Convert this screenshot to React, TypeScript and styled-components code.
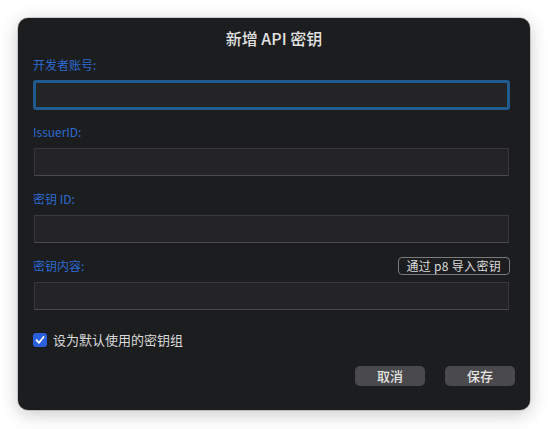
import { createGlobalStyle } from 'styled-components';
import styled from 'styled-components';

const GlobalStyle = createGlobalStyle`
  html, body {
    margin: 0;
    padding: 0;
    background: #ffffff;
    font-family: "Noto Sans CJK SC", "Noto Sans", sans-serif;
  }
`;

const Page = styled.div`
  width: 548px;
  height: 429px;
  padding: 18px 0 0 18px;
  box-sizing: border-box;
`;

const Dialog = styled.div`
  width: 512px;
  height: 392px;
  box-sizing: border-box;
  background: #1c1d1f;
  border-radius: 10px;
  box-shadow: 0 4px 18px rgba(0, 0, 0, 0.22), 0 0 0 0.5px rgba(0, 0, 0, 0.3);
  padding: 9px 15px 0 15px;
  display: flex;
  flex-direction: column;
`;

const Title = styled.div`
  text-align: center;
  color: #e2e2e2;
  font-size: 16px;
  font-weight: 500;
  line-height: 22px;
  margin-bottom: 6px;
`;

const Field = styled.div`
  display: flex;
  flex-direction: column;
  padding-right: 5px;
  margin-bottom: 12px;
`;

const LabelRow = styled.div`
  display: flex;
  align-items: center;
  justify-content: space-between;
  height: 20px;
  margin-bottom: 5px;
`;

const Label = styled.label`
  color: #2d6ad0;
  font-size: 12px;
  line-height: 16px;
`;

const Input = styled.input<{ $focused?: boolean }>`
  box-sizing: border-box;
  height: 28px;
  width: ${(p) => (p.$focused ? '100%' : 'calc(100% - 2px)')};
  margin: ${(p) => (p.$focused ? '0' : '1px 1px')};
  background: #242426;
  color: #e0e0e0;
  font-family: inherit;
  font-size: 13px;
  padding: 0 4px;
  outline: none;
  border: 1px solid #38383a;
  border-bottom-color: #4a4a4c;
  border-radius: ${(p) => (p.$focused ? '3px' : '0')};
  ${(p) =>
    p.$focused &&
    `
    height: 30px;
    border: 3px solid #1f5b8f;
    caret-color: #ffffff;
  `}
`;

const SmallButton = styled.button`
  height: 18px;
  box-sizing: border-box;
  padding: 0 8px;
  background: transparent;
  border: 1px solid #7a7a7c;
  border-radius: 4px;
  color: #dcdcdc;
  font-family: inherit;
  font-size: 12px;
  line-height: 16px;
  letter-spacing: 0.3px;
`;

const CheckRow = styled.label`
  display: flex;
  align-items: center;
  gap: 6px;
  margin-top: 7px;
  color: #dadada;
  font-size: 13px;
`;

const CheckBox = styled.span`
  width: 14px;
  height: 14px;
  border-radius: 3px;
  background: #2a5fe0;
  display: flex;
  align-items: center;
  justify-content: center;
`;

const Actions = styled.div`
  display: flex;
  justify-content: flex-end;
  gap: 20px;
  margin-top: 17px;
`;

const ActionButton = styled.button`
  width: 70px;
  height: 20px;
  border: none;
  border-radius: 5px;
  background: #4a4a4c;
  color: #e6e6e6;
  font-family: inherit;
  font-size: 13px;
  font-weight: 500;
  line-height: 20px;
  padding: 0;
`;

export default function App() {
  return (
    <>
      <GlobalStyle />
      <Page>
        <Dialog>
          <Title>新增 API 密钥</Title>
          <Field>
            <LabelRow>
              <Label>开发者账号:</Label>
            </LabelRow>
            <Input $focused autoFocus />
          </Field>
          <Field>
            <LabelRow>
              <Label>IssuerID:</Label>
            </LabelRow>
            <Input />
          </Field>
          <Field>
            <LabelRow>
              <Label>密钥 ID:</Label>
            </LabelRow>
            <Input />
          </Field>
          <Field>
            <LabelRow>
              <Label>密钥内容:</Label>
              <SmallButton>通过 p8 导入密钥</SmallButton>
            </LabelRow>
            <Input />
          </Field>
          <CheckRow>
            <CheckBox>
              <svg width="10" height="10" viewBox="0 0 10 10">
                <path d="M1.5 5.2 L4 7.8 L8.6 2" fill="none" stroke="#fff" strokeWidth="1.8" strokeLinecap="round" strokeLinejoin="round" />
              </svg>
            </CheckBox>
            设为默认使用的密钥组
          </CheckRow>
          <Actions>
            <ActionButton>取消</ActionButton>
            <ActionButton>保存</ActionButton>
          </Actions>
        </Dialog>
      </Page>
    </>
  );
}
